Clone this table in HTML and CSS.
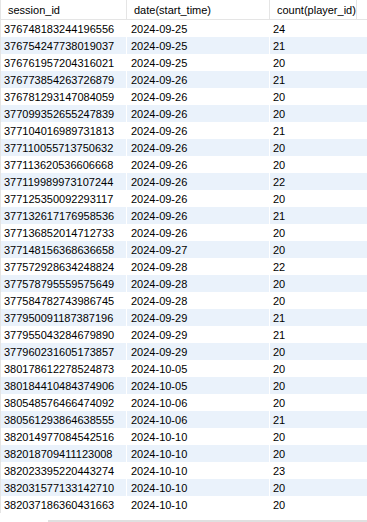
FILE: index.html
```html
<!DOCTYPE html>
<html>
<head>
<meta charset="utf-8">
<link rel="stylesheet" href="styles.css">
</head>
<body>
<div class="grid">
  <div class="head">
    <div class="hc c1">session_id</div>
    <div class="hc c2">date(start_time)</div>
    <div class="hc c3">count(player_id)</div>
  </div>
  <div class="rows" id="rows">
    <div class="row"><div class="cell c1">376748183244196556</div><div class="cell c2">2024-09-25</div><div class="cell c3">24</div></div>
    <div class="row"><div class="cell c1">376754247738019037</div><div class="cell c2">2024-09-25</div><div class="cell c3">21</div></div>
    <div class="row"><div class="cell c1">376761957204316021</div><div class="cell c2">2024-09-25</div><div class="cell c3">20</div></div>
    <div class="row"><div class="cell c1">376773854263726879</div><div class="cell c2">2024-09-26</div><div class="cell c3">21</div></div>
    <div class="row"><div class="cell c1">376781293147084059</div><div class="cell c2">2024-09-26</div><div class="cell c3">20</div></div>
    <div class="row"><div class="cell c1">377099352655247839</div><div class="cell c2">2024-09-26</div><div class="cell c3">20</div></div>
    <div class="row"><div class="cell c1">377104016989731813</div><div class="cell c2">2024-09-26</div><div class="cell c3">21</div></div>
    <div class="row"><div class="cell c1">377110055713750632</div><div class="cell c2">2024-09-26</div><div class="cell c3">20</div></div>
    <div class="row"><div class="cell c1">377113620536606668</div><div class="cell c2">2024-09-26</div><div class="cell c3">20</div></div>
    <div class="row"><div class="cell c1">377119989973107244</div><div class="cell c2">2024-09-26</div><div class="cell c3">22</div></div>
    <div class="row"><div class="cell c1">377125350092293117</div><div class="cell c2">2024-09-26</div><div class="cell c3">20</div></div>
    <div class="row"><div class="cell c1">377132617176958536</div><div class="cell c2">2024-09-26</div><div class="cell c3">21</div></div>
    <div class="row"><div class="cell c1">377136852014712733</div><div class="cell c2">2024-09-26</div><div class="cell c3">20</div></div>
    <div class="row"><div class="cell c1">377148156368636658</div><div class="cell c2">2024-09-27</div><div class="cell c3">20</div></div>
    <div class="row"><div class="cell c1">377572928634248824</div><div class="cell c2">2024-09-28</div><div class="cell c3">22</div></div>
    <div class="row"><div class="cell c1">377578795559575649</div><div class="cell c2">2024-09-28</div><div class="cell c3">20</div></div>
    <div class="row"><div class="cell c1">377584782743986745</div><div class="cell c2">2024-09-28</div><div class="cell c3">20</div></div>
    <div class="row"><div class="cell c1">377950091187387196</div><div class="cell c2">2024-09-29</div><div class="cell c3">21</div></div>
    <div class="row"><div class="cell c1">377955043284679890</div><div class="cell c2">2024-09-29</div><div class="cell c3">21</div></div>
    <div class="row"><div class="cell c1">377960231605173857</div><div class="cell c2">2024-09-29</div><div class="cell c3">20</div></div>
    <div class="row"><div class="cell c1">380178612278524873</div><div class="cell c2">2024-10-05</div><div class="cell c3">20</div></div>
    <div class="row"><div class="cell c1">380184410484374906</div><div class="cell c2">2024-10-05</div><div class="cell c3">20</div></div>
    <div class="row"><div class="cell c1">380548576466474092</div><div class="cell c2">2024-10-06</div><div class="cell c3">20</div></div>
    <div class="row"><div class="cell c1">380561293864638555</div><div class="cell c2">2024-10-06</div><div class="cell c3">21</div></div>
    <div class="row"><div class="cell c1">382014977084542516</div><div class="cell c2">2024-10-10</div><div class="cell c3">20</div></div>
    <div class="row"><div class="cell c1">382018709411123008</div><div class="cell c2">2024-10-10</div><div class="cell c3">20</div></div>
    <div class="row"><div class="cell c1">382023395220443274</div><div class="cell c2">2024-10-10</div><div class="cell c3">23</div></div>
    <div class="row"><div class="cell c1">382031577133142710</div><div class="cell c2">2024-10-10</div><div class="cell c3">20</div></div>
    <div class="row"><div class="cell c1">382037186360431663</div><div class="cell c2">2024-10-10</div><div class="cell c3">20</div></div>
  </div>
  <div class="footer"><div class="scroll"></div></div>
</div>
</body>
</html>
```
FILE: styles.css
```css
html, body {
  margin: 0;
  padding: 0;
  background: #ffffff;
}
body {
  font-family: "Liberation Sans", Arial, sans-serif;
  font-size: 11px;
  color: #000000;
  width: 367px;
  height: 522px;
  overflow: hidden;
}
.grid {
  display: flex;
  flex-direction: column;
  width: 367px;
  height: 522px;
}
.head {
  display: grid;
  grid-template-columns: 126px 143px 88px;
  height: 20px;
  border-bottom: 1px solid #e5e5e5;
  box-sizing: border-box;
}
.hc {
  display: flex;
  align-items: center;
  padding-left: 7px;
  border-left: 1px solid #e5e5e5;
  color: #000;
  font-size: 11px;
  box-sizing: border-box;
}
.hc.c3 {
  border-right: 1px solid #e5e5e5;
}
.hc.c1 {
  padding-left: 7px;
}
.rows {
  display: flex;
  flex-direction: column;
  border-left: 1px solid #e5e5e5;
  width: 367px;
  box-sizing: border-box;
}
.row {
  display: grid;
  grid-template-columns: 125px 143px 98px;
  height: 17px;
}
.row:nth-child(even) {
  background: #eaf2fb;
}
.cell {
  display: flex;
  align-items: center;
  padding-left: 4px;
  white-space: nowrap;
  box-sizing: border-box;
}
.row:nth-child(even) .cell.c2,
.row:nth-child(even) .cell.c3 {
  border-left: 1px solid #ffffff;
}
.row:nth-child(odd) .cell.c2,
.row:nth-child(odd) .cell.c3 {
  border-left: 1px solid transparent;
}
.cell.c1 {
  padding-left: 3px;
}
.cell.c3 {
  padding-left: 3px;
}
.footer {
  flex: 1;
  display: flex;
  align-items: flex-end;
}
.scroll {
  margin-left: 48px;
  width: 319px;
  height: 2px;
  background: #e0e0e0;
}
```
